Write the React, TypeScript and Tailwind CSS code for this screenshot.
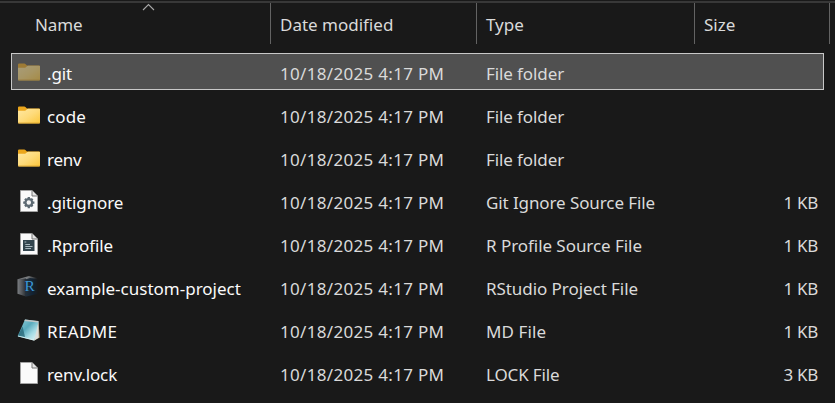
import type { ReactNode } from "react";

function FolderIcon({ dim = false }: { dim?: boolean }) {
  return (
    <svg width="24" height="24" viewBox="0 0 24 24" className={dim ? "opacity-50" : ""}>
      <defs>
        <linearGradient id="folderFront" x1="0" y1="0" x2="1" y2="1">
          <stop offset="0" stopColor="#ffe8a2" />
          <stop offset="0.5" stopColor="#fedb7b" />
          <stop offset="1" stopColor="#fbc73c" />
        </linearGradient>
      </defs>
      <path d="M1 4.6Q1 3.5 2.1 3.5H7.4Q8 3.5 8.4 3.9L10 5.4H22Q23 5.4 23 6.4V12H1Z" fill="#eba61c" />
      <path d="M1 7.8H7.6Q8.3 7.8 8.8 7.3L10 6.2Q10.4 5.8 11 5.8H22.2Q23 5.8 23 6.6V19.6Q23 20.4 22.2 20.4H1.8Q1 20.4 1 19.6Z" fill="url(#folderFront)" />
      <path d="M1.2 20H22.8" stroke="#dda52e" strokeWidth="0.8" />
    </svg>
  );
}

function PageIcon({ children }: { children?: ReactNode }) {
  return (
    <svg width="24" height="24" viewBox="0 0 24 24">
      <path d="M3.5 1.5H15L20.5 7V22.5H3.5Z" fill="#fafafa" stroke="#a5a5a5" strokeWidth="0.9" />
      <path d="M15 1.5V7H20.5" fill="#e4e4e4" stroke="#777" strokeWidth="1" />
      {children}
    </svg>
  );
}

function GearPage() {
  return (
    <PageIcon>
      <g stroke="#5d6a73" strokeWidth="2.3">
        <path d="M11.8 8V19.2M6.2 13.6H17.4M8 9.8L15.6 17.4M15.6 9.8L8 17.4" />
      </g>
      <circle cx="11.8" cy="13.6" r="3.4" fill="#f5f5f5" stroke="#5d6a73" strokeWidth="2.3" />
    </PageIcon>
  );
}

function ScriptPage() {
  return (
    <PageIcon>
      <path d="M6 8H17.5V19H6Z" fill="#33454e" />
      <path d="M7.5 10H9.3M8.3 12.5H13M8.3 14.5H15.5M8.3 16.5H14" stroke="#b7c5cb" strokeWidth="0.9" />
    </PageIcon>
  );
}

function RStudioIcon() {
  return (
    <svg width="24" height="24" viewBox="0 0 24 24">
      <defs>
        <linearGradient id="cubeLeft" x1="0" y1="0" x2="1" y2="0">
          <stop offset="0" stopColor="#7b7e82" />
          <stop offset="0.4" stopColor="#5c5f63" />
          <stop offset="1" stopColor="#272c31" />
        </linearGradient>
        <linearGradient id="cubeRight" x1="0" y1="0" x2="1" y2="0">
          <stop offset="0" stopColor="#26313b" />
          <stop offset="0.6" stopColor="#122232" />
          <stop offset="1" stopColor="#191b1d" />
        </linearGradient>
        <linearGradient id="cubeTop" x1="0" y1="0" x2="1" y2="0">
          <stop offset="0" stopColor="#74777b" />
          <stop offset="0.5" stopColor="#7a7d80" />
          <stop offset="1" stopColor="#202224" />
        </linearGradient>
      </defs>
      <path d="M0.5 4.2L12 1L20.5 3.2L8 6Z" fill="url(#cubeTop)" />
      <path d="M0.5 4.2L9 3.4V21.5L0.5 18.8Z" fill="url(#cubeLeft)" />
      <path d="M8 4.6L13 3L20.5 4V19L9.5 21.6L8 21Z" fill="url(#cubeRight)" />
      <text x="7.4" y="15.8" fontSize="15.5" fill="#3a96d6" className="font-['Liberation_Serif',serif]">R</text>
    </svg>
  );
}

function NotepadIcon() {
  return (
    <svg width="24" height="24" viewBox="0 0 24 24">
      <defs>
        <linearGradient id="padFront" x1="0" y1="0.1" x2="0.9" y2="1">
          <stop offset="0" stopColor="#8ccbd6" />
          <stop offset="0.4" stopColor="#5aabbd" />
          <stop offset="0.68" stopColor="#a3dae3" />
          <stop offset="1" stopColor="#e2f5f6" />
        </linearGradient>
      </defs>
      <path d="M21.3 4L23 19.5L17 22.6Z" fill="#8b7654" />
      <path d="M21.5 3.3L21.8 19.8L17.4 22.6L17 14Z" fill="#dcdeda" />
      <path d="M8 1.6L21.5 3.2L17.4 22.6L0.6 18.2Z" fill="url(#padFront)" />
      <path d="M5.6 8.5L8 19L0.8 17.8Z" fill="#22606f" opacity="0.7" />
      <path d="M8 1.4L21.6 3L21.2 4.6L7.4 3Z" fill="#c3c8c8" />
      <path d="M1 18L17.2 22.2" stroke="#d9f2f4" strokeWidth="0.9" />
    </svg>
  );
}

type Row = {
  icon: ReactNode;
  name: string;
  nameTracking?: string;
  type: string;
  typeTracking?: string;
  size?: string;
  selected?: boolean;
};

const rows: Row[] = [
  { icon: <FolderIcon dim />, name: ".git", nameTracking: "tracking-[-0.1px]", type: "File folder", selected: true },
  { icon: <FolderIcon />, name: "code", nameTracking: "tracking-[0.15px]", type: "File folder" },
  { icon: <FolderIcon />, name: "renv", nameTracking: "tracking-[-0.25px]", type: "File folder" },
  { icon: <GearPage />, name: ".gitignore", nameTracking: "tracking-[-0.12px]", type: "Git Ignore Source File", size: "1 KB" },
  { icon: <ScriptPage />, name: ".Rprofile", nameTracking: "tracking-[-0.08px]", type: "R Profile Source File", typeTracking: "tracking-[-0.05px]", size: "1 KB" },
  { icon: <RStudioIcon />, name: "example-custom-project", type: "RStudio Project File", typeTracking: "tracking-[-0.06px]", size: "1 KB" },
  { icon: <NotepadIcon />, name: "README", nameTracking: "tracking-[0.35px]", type: "MD File", typeTracking: "tracking-[0.1px]", size: "1 KB" },
  { icon: <PageIcon />, name: "renv.lock", nameTracking: "tracking-[-0.12px]", type: "LOCK File", typeTracking: "tracking-[-0.15px]", size: "3 KB" },
];

function FileRow({ icon, name, nameTracking = "", type, typeTracking = "tracking-[-0.1px]", size, selected }: Row) {
  return (
    <div
      className={
        "flex h-[37px] items-center border pl-[5px] pr-[5px] " +
        (selected ? "border-[#c8c8c8] bg-[#505050]" : "border-transparent")
      }
    >
      <div className="flex w-[263px] items-center">
        <span className="mr-[6px] block size-6 shrink-0">{icon}</span>
        <span className={"pt-[4px] text-[#fafafa] " + nameTracking}>{name}</span>
      </div>
      <span className="w-[206px] pt-[4px] tracking-[0.31px]">10/18/2025 4:17 PM</span>
      <span className={"w-[218px] pt-[4px] " + typeTracking}>{type}</span>
      <span className="flex-1 pt-[4px] text-right tracking-[-0.3px]">{size}</span>
    </div>
  );
}

export default function App() {
  return (
    <div className="flex h-[403px] w-[835px] flex-col overflow-hidden whitespace-nowrap bg-[#191919] font-['Noto_Sans','Open_Sans',sans-serif] text-[17px] leading-6 text-[#dadada]">
      <div className="mt-px h-[2px] bg-[#383838]" />
      <div className="flex h-[41px]">
        <div className="relative w-[271px] border-r border-[#636363] pl-[35px] pt-[10px] tracking-[-0.1px]">
          Name
          <svg className="absolute left-[142px] top-0" width="13" height="8" viewBox="0 0 13 8" fill="none">
            <path d="M1 7L6.5 1.5L12 7" stroke="#a8a8a8" strokeWidth="1.1" />
          </svg>
        </div>
        <div className="w-[206px] border-r border-[#636363] pl-[9px] pt-[10px]">Date modified</div>
        <div className="w-[218px] border-r border-[#636363] pl-[9px] pt-[10px]">Type</div>
        <div className="w-[135px] border-r border-[#636363] pl-[9px] pt-[10px]">Size</div>
      </div>
      <div className="ml-[11px] mt-[9px] flex w-[813px] flex-col gap-[6px]">
        {rows.map((row) => (
          <FileRow key={row.name} {...row} />
        ))}
      </div>
    </div>
  );
}
